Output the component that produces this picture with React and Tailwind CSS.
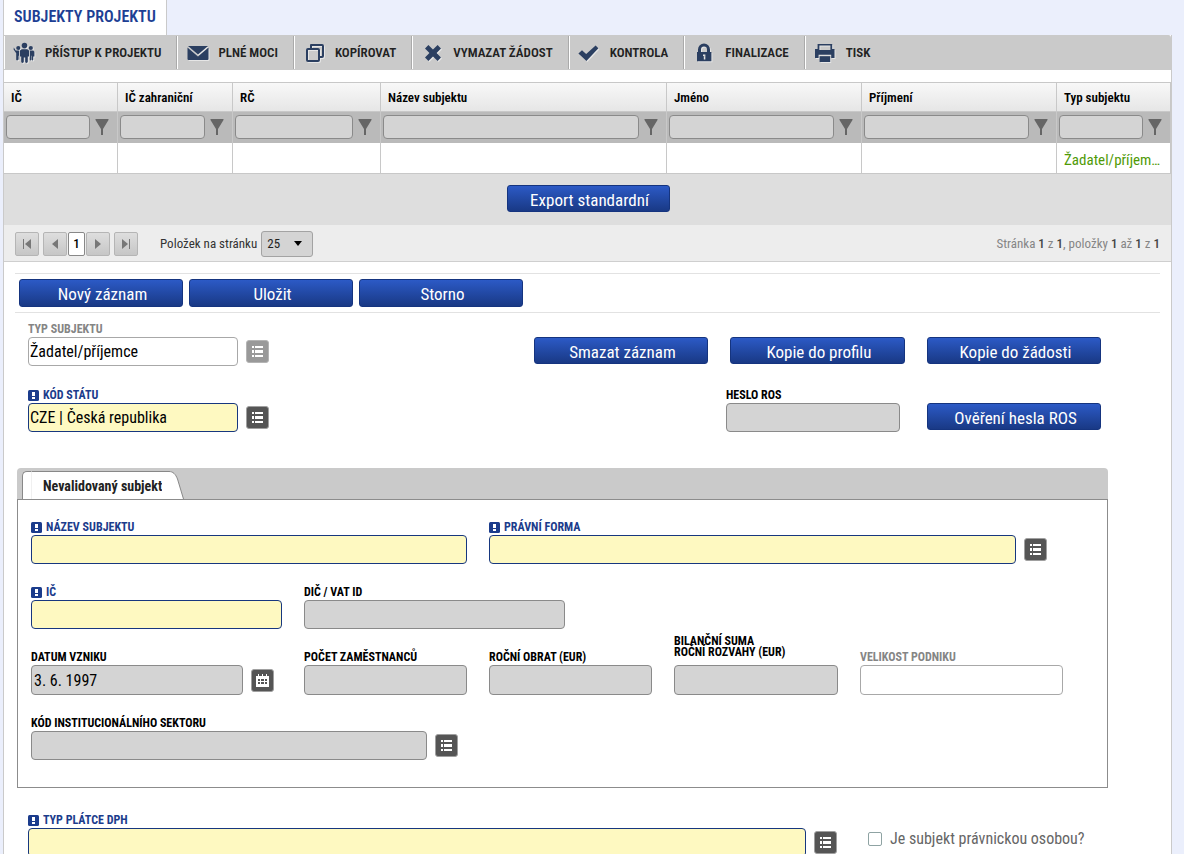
import { useId, useState } from "react";

const columns = [
  { label: "IČ", width: "w-[114px]" },
  { label: "IČ zahraniční", width: "w-[115px]" },
  { label: "RČ", width: "w-[148px]" },
  { label: "Název subjektu", width: "" },
  { label: "Jméno", width: "w-[195px]" },
  { label: "Příjmení", width: "w-[195px]" },
  { label: "Typ subjektu", width: "w-[114px]", value: "Žadatel/příjemce" },
];

const toolbar = [
  { label: "PŘÍSTUP K PROJEKTU", Icon: PeopleIcon },
  { label: "PLNÉ MOCI", Icon: MailIcon },
  { label: "KOPÍROVAT", Icon: CopyIcon },
  { label: "VYMAZAT ŽÁDOST", Icon: CrossIcon },
  { label: "KONTROLA", Icon: CheckIcon },
  { label: "FINALIZACE", Icon: LockIcon },
  { label: "TISK", Icon: PrintIcon },
];

function ToolSvg({ children }) {
  return (
    <svg
      viewBox="0 0 24 24"
      className="h-6 w-6 shrink-0 fill-[#2b3f61] drop-shadow-[1px_1px_0_#e6e6e6]"
      aria-hidden="true"
    >
      {children}
    </svg>
  );
}

function PeopleIcon() {
  return (
    <ToolSvg>
      <circle cx="11.5" cy="4.6" r="2.8" />
      <circle cx="5.3" cy="7" r="2.1" />
      <circle cx="17.8" cy="7" r="2.1" />
      <path d="M8.800 8.200h5.400l1.800 1.400v6h-1.200v5c0 1.800-2.600 1.800-2.600 0v-4h-1.400v4c0 1.800-2.600 1.800-2.600 0v-5H7V9.600z" />
      <path d="M.8 6.400 2.800 9.400H6.200v9.400h-.8v-4H5v4c-.3 1.100-1.800.8-1.800-.2v-6.400L.6 8.600z" />
      <path d="M16.800 9.400h3.400l1.200 1.400v4.800h-1.200v3.200c-.2 1-1.600 1-1.600 0v-4h-.4v4c-.2.800-1.400.800-1.400 0z" />
    </ToolSvg>
  );
}

function MailIcon() {
  return (
    <ToolSvg>
      <path d="M2 5h20l-10 8.400z" />
      <path d="M1.500 6.400 12 15.400l10.500-9V18a1 1 0 0 1-1 1h-19a1 1 0 0 1-1-1z" />
    </ToolSvg>
  );
}

function CopyIcon() {
  return (
    <ToolSvg>
      <path
        d="M8 3h11a2 2 0 0 1 2 2v10a2 2 0 0 1-2 2h-2v2a2 2 0 0 1-2 2H5a2 2 0 0 1-2-2V9a2 2 0 0 1 2-2h2V4a1 1 0 0 1 1-1zm1 4h6a2 2 0 0 1 2 2v6h2V5H9zM5 9v10h10V9z"
        fillRule="evenodd"
      />
    </ToolSvg>
  );
}

function CrossIcon() {
  return (
    <ToolSvg>
      <path d="M4 7.400 7.400 4 12 8.400 16.600 4 20 7.400 15.600 12l4.400 4.600-3.400 3.400-4.600-4.400L7.400 20 4 16.600 8.400 12z" />
    </ToolSvg>
  );
}

function CheckIcon() {
  return (
    <ToolSvg>
      <path d="M.4 12.600 4 9.200l4.200 3.900L17.600 4.400 20.400 7.200 8.400 20z" />
    </ToolSvg>
  );
}

function LockIcon() {
  return (
    <ToolSvg>
      <path
        d="M4 11h1V8.400a6 6 0 0 1 12 0V11h1.400v9.200H4zm4 0h6V8.400a3 3 0 0 0-6 0zm2 2.400v1.600h.8v3.400h1.600v-5z"
        fillRule="evenodd"
      />
    </ToolSvg>
  );
}

function PrintIcon() {
  return (
    <ToolSvg>
      <path
        d="M3.600 3h14.600v5h2.300v9h-3.300v-3.200H4.600V17H1V8h2.600zm1.800 1.600V9h11V4.600z"
        fillRule="evenodd"
      />
      <path d="M5.600 15.200h10.600V21H5.600z" />
    </ToolSvg>
  );
}

function FunnelIcon() {
  return (
    <svg viewBox="0 0 14 18" className="h-[18px] w-[14px] fill-[#666]" aria-hidden="true">
      <path d="M.5 1h13v1L8 11v6H6v-6L.5 2z" />
    </svg>
  );
}

function PagerIcon({ flip, bar }) {
  return (
    <svg
      viewBox="0 0 12 12"
      className={flip ? "h-3 w-3 -scale-x-100 fill-[#777]" : "h-3 w-3 fill-[#777]"}
      aria-hidden="true"
    >
      {bar && <path d="M2 1h1v10H2z" />}
      <path d={bar ? "M10 1v10L4 6z" : "M9 1v10L3 6z"} />
    </svg>
  );
}

function RequiredMark() {
  return (
    <svg viewBox="0 0 11 11" className="mr-1 h-[11px] w-[11px] shrink-0" aria-hidden="true">
      <rect width="11" height="11" rx="1.500" fill="#1b3c8c" />
      <path d="M4 2h3v4H4zM4 7h3v2H4z" fill="#fff" />
    </svg>
  );
}

function ListButton({ label, muted }) {
  return (
    <button
      type="button"
      aria-label={label}
      className={`flex h-[23px] w-[23px] shrink-0 items-center justify-center rounded-[3px] border ${
        muted ? "border-[#b4b4b4] bg-[#999]" : "border-[#a0a0a0] bg-[#555]"
      }`}
    >
      <svg viewBox="0 0 11 13" className="h-[13px] w-[11px] fill-white" aria-hidden="true">
        <path d="M0 1h2v2H0zM3 1h8v2H3zM0 5h2v3H0zM3 5h8v3H3zM0 10h2v2H0zM3 10h8v2H3z" />
      </svg>
    </button>
  );
}

function CalendarButton() {
  return (
    <button
      type="button"
      aria-label="Vybrat datum"
      className="flex h-[23px] w-[23px] shrink-0 items-center justify-center rounded-[3px] border border-[#a0a0a0] bg-[#555]"
    >
      <svg viewBox="0 0 13 13" className="h-[13px] w-[13px]" aria-hidden="true">
        <path d="M0 2h2V0h1v2h3V0h1v2h3V0h1v2h2v11H0z" fill="#fff" />
        <path
          d="M2 5h2v2H2zM5 5h3v2H5zM9 5h2v2H9zM2 8h2v2H2zM5 8h3v2H5zM9 8h2v2H9z"
          fill="#555"
        />
      </svg>
    </button>
  );
}

function BlueButton({ children, className = "h-7" }) {
  return (
    <button
      type="button"
      className={`flex items-center justify-center rounded-[3px] border border-[#15347f] bg-linear-to-b from-[#2c5ac6] to-[#193985] pt-0.5 pl-[3px] text-[17px] leading-5 text-white ${className}`}
    >
      {children}
    </button>
  );
}

const boxStyles = {
  required: "border-[#17377f] bg-[#fef9c1]",
  disabled: "border-[#8a8a8a] bg-[#d4d4d4]",
  plain: "border-[#a8a8a8] bg-white",
};

// Popisek nad polem, volitelně s tlačítkem vpravo
function Field({ label, kind = "disabled", value = "", muted, action, tall, twoLine, pad = "px-px", className = "" }) {
  const id = useId();
  const [text, setText] = useState(value);
  let labelColor = "text-black";
  if (kind === "required") labelColor = "text-[#1b3c8c]";
  if (muted) labelColor = "text-[#858585]";

  return (
    <div className={`flex min-w-0 flex-col justify-end ${className}`}>
      <label
        htmlFor={id}
        className={`flex items-center text-xs font-bold whitespace-pre-line ${
          twoLine ? "pb-[7px] leading-[11px]" : "pb-0.5 leading-3"
        } ${labelColor}`}
      >
        {kind === "required" && <RequiredMark />}
        {label}
      </label>
      <div className="flex items-center gap-2">
        <input
          id={id}
          type="text"
          value={text}
          disabled={kind === "disabled"}
          onChange={(e) => setText(e.target.value)}
          className={`min-w-0 flex-1 rounded-[4px] border text-base leading-5 text-black ${pad} ${
            tall ? "h-[30px]" : "h-[29px]"
          } ${boxStyles[kind]}`}
        />
        {action}
      </div>
    </div>
  );
}

function SubjectTable() {
  return (
    <table className="w-full table-fixed border-separate border-spacing-0 border-t border-[#c8c8c8]">
      <thead>
        <tr>
          {columns.map((col) => (
            <th
              key={col.label}
              className={`h-[29px] border-r border-b border-[#c8c8c8] bg-linear-to-b from-[#f8f8f8] to-[#e6e6e6] px-[7px] pt-0.5 text-left text-[13px] leading-4 font-semibold text-black ${col.width}`}
            >
              {col.label}
            </th>
          ))}
        </tr>
        <tr>
          {columns.map((col) => (
            <td key={col.label} className="h-[31px] border-r border-[#c8c8c8] bg-[#bababa] p-0 pb-px">
              <div className="flex items-center gap-[5px] pr-2 pl-0.5">
                <input
                  type="text"
                  aria-label={`Filtr ${col.label}`}
                  className="h-6 min-w-0 flex-1 rounded-[4px] border border-[#8a8a8a] bg-[#d4d4d4] px-1 text-xs"
                />
                <button type="button" aria-label={`Filtrovat ${col.label}`}>
                  <FunnelIcon />
                </button>
              </div>
            </td>
          ))}
        </tr>
      </thead>
      <tbody>
        <tr>
          {columns.map((col) => (
            <td
              key={col.label}
              className="h-[31px] truncate border-r border-b border-[#c8c8c8] bg-white pt-1 pr-2 pl-[7px] text-[15px] leading-5 text-[#4f9a06]"
            >
              {col.value}
            </td>
          ))}
        </tr>
      </tbody>
    </table>
  );
}

function PagerButton({ label, children }) {
  return (
    <button
      type="button"
      aria-label={label}
      className="flex h-6 w-6 items-center justify-center rounded-[2px] border border-[#b5b5b5] bg-linear-to-b from-[#dedede] to-[#c6c6c6]"
    >
      {children}
    </button>
  );
}

function Pager() {
  const [size, setSize] = useState("25");

  return (
    <div className="flex items-center border-b border-[#cfcfcf] bg-[#ededed] px-[11px] pt-[6px] pb-1 text-[13px] leading-4 text-[#333]">
      <div className="flex items-center">
        <PagerButton label="První stránka">
          <PagerIcon bar />
        </PagerButton>
        <div className="mx-1 flex items-center gap-px">
          <PagerButton label="Předchozí stránka">
            <PagerIcon />
          </PagerButton>
          <button
            type="button"
            className="h-6 w-[17px] rounded-[2px] border border-[#888] bg-white text-[13px] font-medium text-black"
          >
            1
          </button>
          <PagerButton label="Další stránka">
            <PagerIcon flip />
          </PagerButton>
        </div>
        <PagerButton label="Poslední stránka">
          <PagerIcon flip bar />
        </PagerButton>
      </div>
      <label htmlFor="page-size" className="mr-1 ml-[22px]">
        Položek na stránku
      </label>
      <div className="relative">
        <select
          id="page-size"
          value={size}
          onChange={(e) => setSize(e.target.value)}
          className="h-[26px] w-[52px] appearance-none rounded-[3px] border border-[#a3a3a3] bg-[#d4d4d4] pl-[5px] text-[13px] text-[#222]"
        >
          <option>25</option>
          <option>50</option>
          <option>100</option>
        </select>
        <svg
          viewBox="0 0 8 5"
          className="pointer-events-none absolute top-[10px] right-[11px] h-[5px] w-2 fill-black"
          aria-hidden="true"
        >
          <path d="M0 0h8L4 5z" />
        </svg>
      </div>
      <p className="ml-auto text-[#858585]">
        Stránka <b className="font-medium text-[#444]">1</b> z <b className="font-medium text-[#444]">1</b>, položky{" "}
        <b className="font-medium text-[#444]">1</b> až <b className="font-medium text-[#444]">1</b> z{" "}
        <b className="font-medium text-[#444]">1</b>
      </p>
    </div>
  );
}

function SubjectPanel() {
  return (
    <section className="mr-[63px] ml-[13px]">
      <div className="flex items-end rounded-t-[4px] bg-[#cacaca] pt-[3px] pl-[5px]">
        <button type="button" className="flex h-7 text-[14px] leading-7 font-bold text-[#222]">
          <span className="h-7 w-[9px] rounded-tl-[5px] border-t border-l border-[#888] bg-white" />
          <span className="h-7 border-t border-l border-t-[#888] border-l-[#f0f0f0] bg-white pl-[11px]">
            Nevalidovaný subjekt
          </span>
          <svg viewBox="0 0 22 28" className="h-7 w-[22px]" aria-hidden="true">
            <path d="M0 .5H7C11 .5 13.500 3 15.500 8L21.500 28H0z" fill="#fff" />
            <path d="M0 .5H7C11 .5 13.500 3 15.500 8L21.500 28" fill="none" stroke="#888" />
          </svg>
        </button>
      </div>
      <div className="grid grid-cols-[251fr_163fr_163fr_164fr_203fr] gap-x-[22px] gap-y-[22px] border border-[#8c8c8c] pt-[21px] pr-[44px] pb-[27px] pl-[13px]">
        <Field label="NÁZEV SUBJEKTU" kind="required" className="col-span-2" />
        <Field
          label="PRÁVNÍ FORMA"
          kind="required"
          className="col-span-3 pr-4"
          action={<ListButton label="Vybrat právní formu" />}
        />
        <Field label="IČ" kind="required" />
        <div className="col-span-4">
          <div className="grid grid-cols-[261fr_498fr]">
            <Field label="DIČ / VAT ID" />
          </div>
        </div>
        <Field label="DATUM VZNIKU" value="3. 6. 1997" tall pad="px-0.5" className="pr-2" action={<CalendarButton />} />
        <Field label="POČET ZAMĚSTNANCŮ" tall />
        <Field label="ROČNÍ OBRAT (EUR)" tall />
        <Field label={"BILANČNÍ SUMA\nROČNÍ ROZVAHY (EUR)"} tall twoLine className="-mt-4" />
        <Field label="VELIKOST PODNIKU" kind="plain" muted tall />
        <Field
          label="KÓD INSTITUCIONÁLNÍHO SEKTORU"
          className="col-span-2 pr-[9px]"
          action={<ListButton label="Vybrat sektor" />}
        />
      </div>
    </section>
  );
}

export default function App() {
  const [legal, setLegal] = useState(false);

  return (
    <div className="min-h-screen bg-[#ebeffc] pr-3 pl-[3px] font-['Roboto_Condensed','Roboto',sans-serif]">
      <header className="flex">
        <h1 className="h-[35px] border-x border-[#cacaca] bg-white px-[10px] pt-[7px] text-base leading-5 font-semibold text-[#1d3f94]">
          SUBJEKTY PROJEKTU
        </h1>
      </header>

      <main className="border-x border-[#cacaca] bg-white pb-6">
        <nav className="flex h-[35px] rounded-tr-[3px] border-y border-[#cacaca] bg-[#cacaca]">
          {toolbar.map(({ label, Icon }) => (
            <button
              key={label}
              type="button"
              className="flex items-center gap-2 border-r border-l border-r-[#aaa] border-l-white pr-[15px] pl-2 text-[13px] font-semibold whitespace-nowrap text-[#222] last:border-r-0"
            >
              <Icon />
              {label}
            </button>
          ))}
        </nav>

        <div className="mt-3">
          <SubjectTable />
          <div className="flex justify-center bg-[#dedede] pt-[11px] pb-[13px] pl-px">
            <BlueButton className="h-[27px] w-[163px]">Export standardní</BlueButton>
          </div>
          <Pager />
        </div>

        <div className="mx-[11px] mt-[11px] flex gap-[6px] border-y border-[#e2e2e2] px-1 py-[5px]">
          <BlueButton className="h-7 w-[164px]">Nový záznam</BlueButton>
          <BlueButton className="h-7 w-[164px]">Uložit</BlueButton>
          <BlueButton className="h-7 w-[164px]">Storno</BlueButton>
        </div>

        <form className="mt-[10px]" onSubmit={(e) => e.preventDefault()}>
          <div className="grid grid-cols-[484fr_174fr_175fr_174fr] items-end gap-x-[22px] pr-[70px] pl-6">
            <Field
              label="TYP SUBJEKTU"
              kind="plain"
              muted
              value="Žadatel/příjemce"
              className="w-[241px]"
              action={<ListButton label="Vybrat typ subjektu" muted />}
            />
            <BlueButton className="mb-0.5 h-[27px]">Smazat záznam</BlueButton>
            <BlueButton className="mb-0.5 h-[27px]">Kopie do profilu</BlueButton>
            <BlueButton className="mb-0.5 h-[27px]">Kopie do žádosti</BlueButton>
          </div>

          <div className="mt-[23px] mb-9 grid grid-cols-[671fr_174fr_174fr] items-end gap-x-[27px] pr-[70px] pl-6">
            <Field
              label="KÓD STÁTU"
              kind="required"
              value="CZE | Česká republika"
              className="w-[241px]"
              action={<ListButton label="Vybrat kód státu" />}
            />
            <Field label="HESLO ROS" />
            <BlueButton className="mb-0.5 h-[27px]">Ověření hesla ROS</BlueButton>
          </div>

          <SubjectPanel />

          <div className="mt-[26px] grid grid-cols-[809fr_233fr] items-end gap-x-[31px] pr-[70px] pl-6">
            <Field
              label="TYP PLÁTCE DPH"
              kind="required"
              action={<ListButton label="Vybrat typ plátce DPH" />}
            />
            <label className="mb-2 flex items-center gap-2 text-base leading-5 text-[#666]">
              <input
                type="checkbox"
                checked={legal}
                onChange={(e) => setLegal(e.target.checked)}
                className="h-[14px] w-[14px] appearance-none rounded-[2px] border border-[#8fa3a3] bg-white checked:bg-[#1b3c8c]"
              />
              Je subjekt právnickou osobou?
            </label>
          </div>
        </form>
      </main>
    </div>
  );
}
